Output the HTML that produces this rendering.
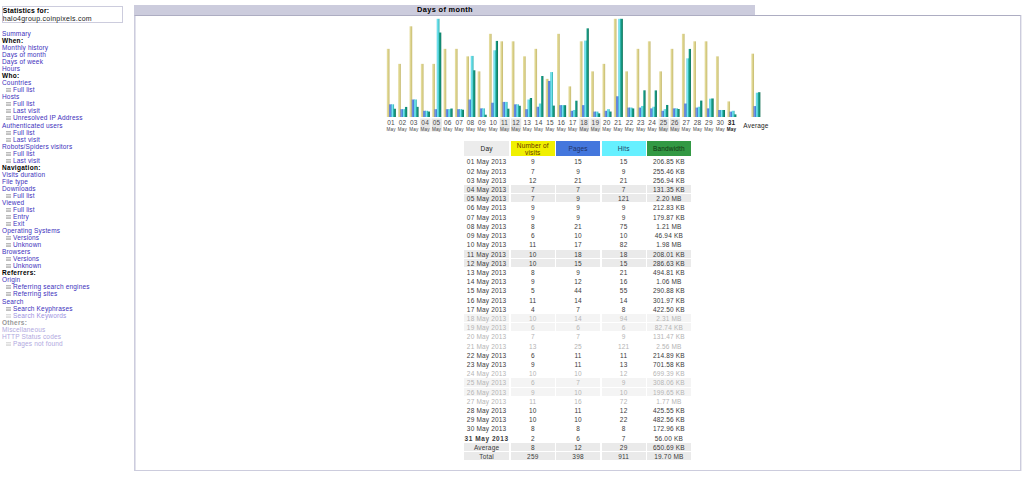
<!DOCTYPE html>
<html><head><meta charset="utf-8"><title>Days of month</title>
<style>
html,body{margin:0;padding:0;background:#fff;}
body{width:1024px;height:478px;overflow:hidden;position:relative;font-family:"Liberation Sans",sans-serif;}
.t{position:absolute;white-space:nowrap;}
.b{position:absolute;}
.ic{width:5px;height:4px;background:linear-gradient(180deg,#bababa 0 1px,#e0e0e0 1px 2px,#cacaca 2px 3px,#bebebe 3px 4px);}
</style></head><body>
<div class="b" style="left:2px;top:6px;width:119px;height:15px;border:1px solid #CCCCDD;"></div>
<div class="t" style="left:2.80px;top:8px;font-size:6.8px;line-height:6.8px;letter-spacing:0.2px;color:#000;font-weight:bold;">Statistics for:</div>
<div class="t" style="left:2.80px;top:15px;font-size:7.0px;line-height:7.0px;letter-spacing:0.25px;color:#222;">halo4group.coinpixels.com</div>
<div class="t" style="left:2.00px;top:31px;font-size:6.5px;line-height:6.5px;letter-spacing:0.17px;color:#3c30bc;">Summary</div>
<div class="t" style="left:2.00px;top:38px;font-size:6.5px;line-height:6.5px;letter-spacing:0.3px;color:#000;font-weight:bold;">When:</div>
<div class="t" style="left:2.00px;top:45px;font-size:6.5px;line-height:6.5px;letter-spacing:0.17px;color:#3c30bc;">Monthly history</div>
<div class="t" style="left:2.00px;top:52px;font-size:6.5px;line-height:6.5px;letter-spacing:0.17px;color:#3c30bc;">Days of month</div>
<div class="t" style="left:2.00px;top:59px;font-size:6.5px;line-height:6.5px;letter-spacing:0.17px;color:#3c30bc;">Days of week</div>
<div class="t" style="left:2.00px;top:66px;font-size:6.5px;line-height:6.5px;letter-spacing:0.17px;color:#3c30bc;">Hours</div>
<div class="t" style="left:2.00px;top:73px;font-size:6.5px;line-height:6.5px;letter-spacing:0.3px;color:#000;font-weight:bold;">Who:</div>
<div class="t" style="left:2.00px;top:80px;font-size:6.5px;line-height:6.5px;letter-spacing:0.17px;color:#3c30bc;">Countries</div>
<div class="b ic" style="left:6px;top:88px;"></div>
<div class="t" style="left:13.00px;top:87px;font-size:6.5px;line-height:6.5px;letter-spacing:0.17px;color:#3c30bc;">Full list</div>
<div class="t" style="left:2.00px;top:94px;font-size:6.5px;line-height:6.5px;letter-spacing:0.17px;color:#3c30bc;">Hosts</div>
<div class="b ic" style="left:6px;top:102px;"></div>
<div class="t" style="left:13.00px;top:101px;font-size:6.5px;line-height:6.5px;letter-spacing:0.17px;color:#3c30bc;">Full list</div>
<div class="b ic" style="left:6px;top:109px;"></div>
<div class="t" style="left:13.00px;top:108px;font-size:6.5px;line-height:6.5px;letter-spacing:0.17px;color:#3c30bc;">Last visit</div>
<div class="b ic" style="left:6px;top:116px;"></div>
<div class="t" style="left:13.00px;top:115px;font-size:6.5px;line-height:6.5px;letter-spacing:0.17px;color:#3c30bc;">Unresolved IP Address</div>
<div class="t" style="left:2.00px;top:123px;font-size:6.5px;line-height:6.5px;letter-spacing:0.17px;color:#3c30bc;">Authenticated users</div>
<div class="b ic" style="left:6px;top:131px;"></div>
<div class="t" style="left:13.00px;top:130px;font-size:6.5px;line-height:6.5px;letter-spacing:0.17px;color:#3c30bc;">Full list</div>
<div class="b ic" style="left:6px;top:138px;"></div>
<div class="t" style="left:13.00px;top:137px;font-size:6.5px;line-height:6.5px;letter-spacing:0.17px;color:#3c30bc;">Last visit</div>
<div class="t" style="left:2.00px;top:144px;font-size:6.5px;line-height:6.5px;letter-spacing:0.17px;color:#3c30bc;">Robots/Spiders visitors</div>
<div class="b ic" style="left:6px;top:152px;"></div>
<div class="t" style="left:13.00px;top:151px;font-size:6.5px;line-height:6.5px;letter-spacing:0.17px;color:#3c30bc;">Full list</div>
<div class="b ic" style="left:6px;top:159px;"></div>
<div class="t" style="left:13.00px;top:158px;font-size:6.5px;line-height:6.5px;letter-spacing:0.17px;color:#3c30bc;">Last visit</div>
<div class="t" style="left:2.00px;top:165px;font-size:6.5px;line-height:6.5px;letter-spacing:0.3px;color:#000;font-weight:bold;">Navigation:</div>
<div class="t" style="left:2.00px;top:172px;font-size:6.5px;line-height:6.5px;letter-spacing:0.17px;color:#3c30bc;">Visits duration</div>
<div class="t" style="left:2.00px;top:179px;font-size:6.5px;line-height:6.5px;letter-spacing:0.17px;color:#3c30bc;">File type</div>
<div class="t" style="left:2.00px;top:186px;font-size:6.5px;line-height:6.5px;letter-spacing:0.17px;color:#3c30bc;">Downloads</div>
<div class="b ic" style="left:6px;top:194px;"></div>
<div class="t" style="left:13.00px;top:193px;font-size:6.5px;line-height:6.5px;letter-spacing:0.17px;color:#3c30bc;">Full list</div>
<div class="t" style="left:2.00px;top:200px;font-size:6.5px;line-height:6.5px;letter-spacing:0.17px;color:#3c30bc;">Viewed</div>
<div class="b ic" style="left:6px;top:208px;"></div>
<div class="t" style="left:13.00px;top:207px;font-size:6.5px;line-height:6.5px;letter-spacing:0.17px;color:#3c30bc;">Full list</div>
<div class="b ic" style="left:6px;top:215px;"></div>
<div class="t" style="left:13.00px;top:214px;font-size:6.5px;line-height:6.5px;letter-spacing:0.17px;color:#3c30bc;">Entry</div>
<div class="b ic" style="left:6px;top:222px;"></div>
<div class="t" style="left:13.00px;top:221px;font-size:6.5px;line-height:6.5px;letter-spacing:0.17px;color:#3c30bc;">Exit</div>
<div class="t" style="left:2.00px;top:228px;font-size:6.5px;line-height:6.5px;letter-spacing:0.17px;color:#3c30bc;">Operating Systems</div>
<div class="b ic" style="left:6px;top:236px;"></div>
<div class="t" style="left:13.00px;top:235px;font-size:6.5px;line-height:6.5px;letter-spacing:0.17px;color:#3c30bc;">Versions</div>
<div class="b ic" style="left:6px;top:243px;"></div>
<div class="t" style="left:13.00px;top:242px;font-size:6.5px;line-height:6.5px;letter-spacing:0.17px;color:#3c30bc;">Unknown</div>
<div class="t" style="left:2.00px;top:249px;font-size:6.5px;line-height:6.5px;letter-spacing:0.17px;color:#3c30bc;">Browsers</div>
<div class="b ic" style="left:6px;top:257px;"></div>
<div class="t" style="left:13.00px;top:256px;font-size:6.5px;line-height:6.5px;letter-spacing:0.17px;color:#3c30bc;">Versions</div>
<div class="b ic" style="left:6px;top:264px;"></div>
<div class="t" style="left:13.00px;top:263px;font-size:6.5px;line-height:6.5px;letter-spacing:0.17px;color:#3c30bc;">Unknown</div>
<div class="t" style="left:2.00px;top:270px;font-size:6.5px;line-height:6.5px;letter-spacing:0.3px;color:#000;font-weight:bold;">Referrers:</div>
<div class="t" style="left:2.00px;top:277px;font-size:6.5px;line-height:6.5px;letter-spacing:0.17px;color:#3c30bc;">Origin</div>
<div class="b ic" style="left:6px;top:285px;"></div>
<div class="t" style="left:13.00px;top:284px;font-size:6.5px;line-height:6.5px;letter-spacing:0.17px;color:#3c30bc;">Referring search engines</div>
<div class="b ic" style="left:6px;top:292px;"></div>
<div class="t" style="left:13.00px;top:291px;font-size:6.5px;line-height:6.5px;letter-spacing:0.17px;color:#3c30bc;">Referring sites</div>
<div class="t" style="left:2.00px;top:299px;font-size:6.5px;line-height:6.5px;letter-spacing:0.17px;color:#3c30bc;">Search</div>
<div class="b ic" style="left:6px;top:307px;"></div>
<div class="t" style="left:13.00px;top:306px;font-size:6.5px;line-height:6.5px;letter-spacing:0.17px;color:#3c30bc;">Search Keyphrases</div>
<div class="b ic" style="left:6px;top:314px;opacity:.5;"></div>
<div class="t" style="left:13.00px;top:313px;font-size:6.5px;line-height:6.5px;letter-spacing:0.17px;color:#9c92e2;">Search Keywords</div>
<div class="t" style="left:2.00px;top:320px;font-size:6.5px;line-height:6.5px;letter-spacing:0.3px;color:#999;font-weight:bold;">Others:</div>
<div class="t" style="left:2.00px;top:327px;font-size:6.5px;line-height:6.5px;letter-spacing:0.17px;color:#b0a8e0;">Miscellaneous</div>
<div class="t" style="left:2.00px;top:334px;font-size:6.5px;line-height:6.5px;letter-spacing:0.17px;color:#b0a8e0;">HTTP Status codes</div>
<div class="b ic" style="left:6px;top:342px;opacity:.5;"></div>
<div class="t" style="left:13.00px;top:341px;font-size:6.5px;line-height:6.5px;letter-spacing:0.17px;color:#b0a8e0;">Pages not found</div>
<div class="b" style="left:134px;top:15px;width:885px;height:454px;border:1px solid #CCCCDD;border-top-color:#ADADC2;box-shadow:inset 1px 0 0 #E2E2EC, 1px 0 0 #EAEAF0;"></div>
<div class="b" style="left:134px;top:5px;width:621px;height:10px;background:#CCCCDD;"></div>
<div class="t" style="left:345.00px;width:200px;text-align:center;top:6px;font-size:7.4px;line-height:7.4px;letter-spacing:0.35px;color:#000;font-weight:bold;">Days of month</div>
<svg class="b" style="left:0;top:0" width="1024" height="140"><defs><linearGradient id="gv" x1="0" x2="1"><stop offset="0" stop-color="#E8E0A8"/><stop offset="0.5" stop-color="#DCD38A"/><stop offset="1" stop-color="#C4B870"/></linearGradient><linearGradient id="gp" x1="0" x2="1"><stop offset="0" stop-color="#5070C4"/><stop offset="0.35" stop-color="#7696EA"/><stop offset="0.7" stop-color="#4A78D8"/><stop offset="1" stop-color="#2064B0"/></linearGradient><linearGradient id="gh" x1="0" x2="1"><stop offset="0" stop-color="#4CCADE"/><stop offset="0.4" stop-color="#78E8F2"/><stop offset="1" stop-color="#24A8A8"/></linearGradient><linearGradient id="gk" x1="0" x2="1"><stop offset="0" stop-color="#18A088"/><stop offset="0.6" stop-color="#12907A"/><stop offset="1" stop-color="#0A6A4C"/></linearGradient></defs><rect x="420.25" y="118.5" width="10.2" height="13.1" fill="#E6E6E6"/><rect x="431.60" y="118.5" width="10.2" height="13.1" fill="#E6E6E6"/><rect x="499.70" y="118.5" width="10.2" height="13.1" fill="#E6E6E6"/><rect x="511.05" y="118.5" width="10.2" height="13.1" fill="#E6E6E6"/><rect x="579.15" y="118.5" width="10.2" height="13.1" fill="#E6E6E6"/><rect x="590.50" y="118.5" width="10.2" height="13.1" fill="#E6E6E6"/><rect x="658.60" y="118.5" width="10.2" height="13.1" fill="#E6E6E6"/><rect x="669.95" y="118.5" width="10.2" height="13.1" fill="#E6E6E6"/><rect x="386.80" y="48.84" width="2.718" height="68.16" fill="url(#gv)"/><rect x="389.07" y="104.33" width="2.718" height="12.67" fill="url(#gp)"/><rect x="391.34" y="104.33" width="2.718" height="12.67" fill="url(#gh)"/><rect x="393.60" y="108.73" width="2.268" height="8.27" fill="url(#gk)"/><rect x="398.15" y="63.86" width="2.718" height="53.14" fill="url(#gv)"/><rect x="400.42" y="109.17" width="2.718" height="7.83" fill="url(#gp)"/><rect x="402.69" y="109.17" width="2.718" height="7.83" fill="url(#gh)"/><rect x="404.95" y="106.92" width="2.268" height="10.08" fill="url(#gk)"/><rect x="409.50" y="26.31" width="2.718" height="90.69" fill="url(#gv)"/><rect x="411.77" y="99.49" width="2.718" height="17.51" fill="url(#gp)"/><rect x="414.04" y="99.49" width="2.718" height="17.51" fill="url(#gh)"/><rect x="416.30" y="106.86" width="2.268" height="10.14" fill="url(#gk)"/><rect x="420.85" y="63.86" width="2.718" height="53.14" fill="url(#gv)"/><rect x="423.12" y="110.78" width="2.718" height="6.22" fill="url(#gp)"/><rect x="425.39" y="110.78" width="2.718" height="6.22" fill="url(#gh)"/><rect x="427.65" y="111.54" width="2.268" height="5.46" fill="url(#gk)"/><rect x="432.20" y="63.86" width="2.718" height="53.14" fill="url(#gv)"/><rect x="434.47" y="109.17" width="2.718" height="7.83" fill="url(#gp)"/><rect x="436.74" y="18.80" width="2.718" height="98.20" fill="url(#gh)"/><rect x="439.00" y="32.53" width="2.268" height="84.47" fill="url(#gk)"/><rect x="443.55" y="48.84" width="2.718" height="68.16" fill="url(#gv)"/><rect x="445.82" y="109.17" width="2.718" height="7.83" fill="url(#gp)"/><rect x="448.09" y="109.17" width="2.718" height="7.83" fill="url(#gh)"/><rect x="450.35" y="108.51" width="2.268" height="8.49" fill="url(#gk)"/><rect x="454.90" y="48.84" width="2.718" height="68.16" fill="url(#gv)"/><rect x="457.17" y="109.17" width="2.718" height="7.83" fill="url(#gp)"/><rect x="459.44" y="109.17" width="2.718" height="7.83" fill="url(#gh)"/><rect x="461.70" y="109.73" width="2.268" height="7.27" fill="url(#gk)"/><rect x="466.25" y="56.35" width="2.718" height="60.65" fill="url(#gv)"/><rect x="468.52" y="99.49" width="2.718" height="17.51" fill="url(#gp)"/><rect x="470.79" y="55.91" width="2.718" height="61.09" fill="url(#gh)"/><rect x="473.05" y="70.28" width="2.268" height="46.72" fill="url(#gk)"/><rect x="477.60" y="71.37" width="2.718" height="45.63" fill="url(#gv)"/><rect x="479.87" y="108.36" width="2.718" height="8.64" fill="url(#gp)"/><rect x="482.14" y="108.36" width="2.718" height="8.64" fill="url(#gh)"/><rect x="484.40" y="114.68" width="2.268" height="2.32" fill="url(#gk)"/><rect x="488.95" y="33.82" width="2.718" height="83.18" fill="url(#gv)"/><rect x="491.22" y="102.72" width="2.718" height="14.28" fill="url(#gp)"/><rect x="493.49" y="50.27" width="2.718" height="66.73" fill="url(#gh)"/><rect x="495.75" y="40.92" width="2.268" height="76.08" fill="url(#gk)"/><rect x="500.30" y="41.33" width="2.718" height="75.67" fill="url(#gv)"/><rect x="502.57" y="101.91" width="2.718" height="15.09" fill="url(#gp)"/><rect x="504.84" y="101.91" width="2.718" height="15.09" fill="url(#gh)"/><rect x="507.10" y="108.69" width="2.268" height="8.31" fill="url(#gk)"/><rect x="511.65" y="41.33" width="2.718" height="75.67" fill="url(#gv)"/><rect x="513.92" y="104.33" width="2.718" height="12.67" fill="url(#gp)"/><rect x="516.19" y="104.33" width="2.718" height="12.67" fill="url(#gh)"/><rect x="518.45" y="105.76" width="2.268" height="11.24" fill="url(#gk)"/><rect x="523.00" y="56.35" width="2.718" height="60.65" fill="url(#gv)"/><rect x="525.27" y="109.17" width="2.718" height="7.83" fill="url(#gp)"/><rect x="527.54" y="99.49" width="2.718" height="17.51" fill="url(#gh)"/><rect x="529.80" y="98.00" width="2.268" height="19.00" fill="url(#gk)"/><rect x="534.35" y="48.84" width="2.718" height="68.16" fill="url(#gv)"/><rect x="536.62" y="106.75" width="2.718" height="10.25" fill="url(#gp)"/><rect x="538.89" y="103.52" width="2.718" height="13.48" fill="url(#gh)"/><rect x="541.15" y="76.01" width="2.268" height="40.99" fill="url(#gk)"/><rect x="545.70" y="78.88" width="2.718" height="38.12" fill="url(#gv)"/><rect x="547.97" y="80.93" width="2.718" height="36.07" fill="url(#gp)"/><rect x="550.24" y="72.05" width="2.718" height="44.95" fill="url(#gh)"/><rect x="552.50" y="105.60" width="2.268" height="11.40" fill="url(#gk)"/><rect x="557.05" y="33.82" width="2.718" height="83.18" fill="url(#gv)"/><rect x="559.32" y="105.14" width="2.718" height="11.86" fill="url(#gp)"/><rect x="561.59" y="105.14" width="2.718" height="11.86" fill="url(#gh)"/><rect x="563.85" y="105.19" width="2.268" height="11.81" fill="url(#gk)"/><rect x="568.40" y="86.39" width="2.718" height="30.61" fill="url(#gv)"/><rect x="570.67" y="110.78" width="2.718" height="6.22" fill="url(#gp)"/><rect x="572.94" y="109.98" width="2.718" height="7.02" fill="url(#gh)"/><rect x="575.20" y="100.70" width="2.268" height="16.30" fill="url(#gk)"/><rect x="579.75" y="41.33" width="2.718" height="75.67" fill="url(#gv)"/><rect x="582.02" y="105.14" width="2.718" height="11.86" fill="url(#gp)"/><rect x="584.29" y="40.58" width="2.718" height="76.42" fill="url(#gh)"/><rect x="586.55" y="28.33" width="2.268" height="88.67" fill="url(#gk)"/><rect x="591.10" y="71.37" width="2.718" height="45.63" fill="url(#gv)"/><rect x="593.37" y="111.59" width="2.718" height="5.41" fill="url(#gp)"/><rect x="595.64" y="111.59" width="2.718" height="5.41" fill="url(#gh)"/><rect x="597.90" y="113.35" width="2.268" height="3.65" fill="url(#gk)"/><rect x="602.45" y="63.86" width="2.718" height="53.14" fill="url(#gv)"/><rect x="604.72" y="110.78" width="2.718" height="6.22" fill="url(#gp)"/><rect x="606.99" y="109.17" width="2.718" height="7.83" fill="url(#gh)"/><rect x="609.25" y="111.54" width="2.268" height="5.46" fill="url(#gk)"/><rect x="613.80" y="18.80" width="2.718" height="98.20" fill="url(#gv)"/><rect x="616.07" y="96.26" width="2.718" height="20.74" fill="url(#gp)"/><rect x="618.34" y="18.80" width="2.718" height="98.20" fill="url(#gh)"/><rect x="620.60" y="18.80" width="2.268" height="98.20" fill="url(#gk)"/><rect x="625.15" y="71.37" width="2.718" height="45.63" fill="url(#gv)"/><rect x="627.42" y="107.56" width="2.718" height="9.44" fill="url(#gp)"/><rect x="629.69" y="107.56" width="2.718" height="9.44" fill="url(#gh)"/><rect x="631.95" y="108.43" width="2.268" height="8.57" fill="url(#gk)"/><rect x="636.50" y="48.84" width="2.718" height="68.16" fill="url(#gv)"/><rect x="638.77" y="107.56" width="2.718" height="9.44" fill="url(#gp)"/><rect x="641.04" y="105.94" width="2.718" height="11.06" fill="url(#gh)"/><rect x="643.30" y="90.30" width="2.268" height="26.70" fill="url(#gk)"/><rect x="647.85" y="41.33" width="2.718" height="75.67" fill="url(#gv)"/><rect x="650.12" y="108.36" width="2.718" height="8.64" fill="url(#gp)"/><rect x="652.39" y="106.75" width="2.718" height="10.25" fill="url(#gh)"/><rect x="654.65" y="90.38" width="2.268" height="26.62" fill="url(#gk)"/><rect x="659.20" y="71.37" width="2.718" height="45.63" fill="url(#gv)"/><rect x="661.47" y="110.78" width="2.718" height="6.22" fill="url(#gp)"/><rect x="663.74" y="109.17" width="2.718" height="7.83" fill="url(#gh)"/><rect x="666.00" y="104.96" width="2.268" height="12.04" fill="url(#gk)"/><rect x="670.55" y="48.84" width="2.718" height="68.16" fill="url(#gv)"/><rect x="672.82" y="108.36" width="2.718" height="8.64" fill="url(#gp)"/><rect x="675.09" y="108.36" width="2.718" height="8.64" fill="url(#gh)"/><rect x="677.35" y="109.00" width="2.268" height="8.00" fill="url(#gk)"/><rect x="681.90" y="33.82" width="2.718" height="83.18" fill="url(#gv)"/><rect x="684.17" y="103.52" width="2.718" height="13.48" fill="url(#gp)"/><rect x="686.44" y="58.33" width="2.718" height="58.67" fill="url(#gh)"/><rect x="688.70" y="48.93" width="2.268" height="68.07" fill="url(#gk)"/><rect x="693.25" y="41.33" width="2.718" height="75.67" fill="url(#gv)"/><rect x="695.52" y="107.56" width="2.718" height="9.44" fill="url(#gp)"/><rect x="697.79" y="106.75" width="2.718" height="10.25" fill="url(#gh)"/><rect x="700.05" y="100.58" width="2.268" height="16.42" fill="url(#gk)"/><rect x="704.60" y="41.33" width="2.718" height="75.67" fill="url(#gv)"/><rect x="706.87" y="108.36" width="2.718" height="8.64" fill="url(#gp)"/><rect x="709.14" y="98.68" width="2.718" height="18.32" fill="url(#gh)"/><rect x="711.40" y="98.46" width="2.268" height="18.54" fill="url(#gk)"/><rect x="715.95" y="56.35" width="2.718" height="60.65" fill="url(#gv)"/><rect x="718.22" y="109.98" width="2.718" height="7.02" fill="url(#gp)"/><rect x="720.49" y="109.98" width="2.718" height="7.02" fill="url(#gh)"/><rect x="722.75" y="109.99" width="2.268" height="7.01" fill="url(#gk)"/><rect x="727.30" y="101.41" width="2.718" height="15.59" fill="url(#gv)"/><rect x="729.57" y="111.59" width="2.718" height="5.41" fill="url(#gp)"/><rect x="731.84" y="110.78" width="2.718" height="6.22" fill="url(#gh)"/><rect x="734.10" y="114.35" width="2.268" height="2.65" fill="url(#gk)"/><rect x="751.30" y="53.68" width="2.718" height="63.32" fill="url(#gv)"/><rect x="753.57" y="106.07" width="2.718" height="10.93" fill="url(#gp)"/><rect x="755.84" y="92.72" width="2.718" height="24.28" fill="url(#gh)"/><rect x="758.10" y="92.20" width="2.268" height="24.80" fill="url(#gk)"/></svg>
<div class="t" style="left:291.10px;width:200px;text-align:center;top:120px;font-size:6.5px;line-height:6.5px;letter-spacing:0.17px;color:#4a4a4a;">01</div>
<div class="t" style="left:291.10px;width:200px;text-align:center;top:128px;font-size:4.6px;line-height:4.6px;letter-spacing:0.17px;color:#484848;">May</div>
<div class="t" style="left:302.45px;width:200px;text-align:center;top:120px;font-size:6.5px;line-height:6.5px;letter-spacing:0.17px;color:#4a4a4a;">02</div>
<div class="t" style="left:302.45px;width:200px;text-align:center;top:128px;font-size:4.6px;line-height:4.6px;letter-spacing:0.17px;color:#484848;">May</div>
<div class="t" style="left:313.80px;width:200px;text-align:center;top:120px;font-size:6.5px;line-height:6.5px;letter-spacing:0.17px;color:#4a4a4a;">03</div>
<div class="t" style="left:313.80px;width:200px;text-align:center;top:128px;font-size:4.6px;line-height:4.6px;letter-spacing:0.17px;color:#484848;">May</div>
<div class="t" style="left:325.15px;width:200px;text-align:center;top:120px;font-size:6.5px;line-height:6.5px;letter-spacing:0.17px;color:#4a4a4a;">04</div>
<div class="t" style="left:325.15px;width:200px;text-align:center;top:128px;font-size:4.6px;line-height:4.6px;letter-spacing:0.17px;color:#484848;">May</div>
<div class="t" style="left:336.50px;width:200px;text-align:center;top:120px;font-size:6.5px;line-height:6.5px;letter-spacing:0.17px;color:#4a4a4a;">05</div>
<div class="t" style="left:336.50px;width:200px;text-align:center;top:128px;font-size:4.6px;line-height:4.6px;letter-spacing:0.17px;color:#484848;">May</div>
<div class="t" style="left:347.85px;width:200px;text-align:center;top:120px;font-size:6.5px;line-height:6.5px;letter-spacing:0.17px;color:#4a4a4a;">06</div>
<div class="t" style="left:347.85px;width:200px;text-align:center;top:128px;font-size:4.6px;line-height:4.6px;letter-spacing:0.17px;color:#484848;">May</div>
<div class="t" style="left:359.20px;width:200px;text-align:center;top:120px;font-size:6.5px;line-height:6.5px;letter-spacing:0.17px;color:#4a4a4a;">07</div>
<div class="t" style="left:359.20px;width:200px;text-align:center;top:128px;font-size:4.6px;line-height:4.6px;letter-spacing:0.17px;color:#484848;">May</div>
<div class="t" style="left:370.55px;width:200px;text-align:center;top:120px;font-size:6.5px;line-height:6.5px;letter-spacing:0.17px;color:#4a4a4a;">08</div>
<div class="t" style="left:370.55px;width:200px;text-align:center;top:128px;font-size:4.6px;line-height:4.6px;letter-spacing:0.17px;color:#484848;">May</div>
<div class="t" style="left:381.90px;width:200px;text-align:center;top:120px;font-size:6.5px;line-height:6.5px;letter-spacing:0.17px;color:#4a4a4a;">09</div>
<div class="t" style="left:381.90px;width:200px;text-align:center;top:128px;font-size:4.6px;line-height:4.6px;letter-spacing:0.17px;color:#484848;">May</div>
<div class="t" style="left:393.25px;width:200px;text-align:center;top:120px;font-size:6.5px;line-height:6.5px;letter-spacing:0.17px;color:#4a4a4a;">10</div>
<div class="t" style="left:393.25px;width:200px;text-align:center;top:128px;font-size:4.6px;line-height:4.6px;letter-spacing:0.17px;color:#484848;">May</div>
<div class="t" style="left:404.60px;width:200px;text-align:center;top:120px;font-size:6.5px;line-height:6.5px;letter-spacing:0.17px;color:#4a4a4a;">11</div>
<div class="t" style="left:404.60px;width:200px;text-align:center;top:128px;font-size:4.6px;line-height:4.6px;letter-spacing:0.17px;color:#484848;">May</div>
<div class="t" style="left:415.95px;width:200px;text-align:center;top:120px;font-size:6.5px;line-height:6.5px;letter-spacing:0.17px;color:#4a4a4a;">12</div>
<div class="t" style="left:415.95px;width:200px;text-align:center;top:128px;font-size:4.6px;line-height:4.6px;letter-spacing:0.17px;color:#484848;">May</div>
<div class="t" style="left:427.30px;width:200px;text-align:center;top:120px;font-size:6.5px;line-height:6.5px;letter-spacing:0.17px;color:#4a4a4a;">13</div>
<div class="t" style="left:427.30px;width:200px;text-align:center;top:128px;font-size:4.6px;line-height:4.6px;letter-spacing:0.17px;color:#484848;">May</div>
<div class="t" style="left:438.65px;width:200px;text-align:center;top:120px;font-size:6.5px;line-height:6.5px;letter-spacing:0.17px;color:#4a4a4a;">14</div>
<div class="t" style="left:438.65px;width:200px;text-align:center;top:128px;font-size:4.6px;line-height:4.6px;letter-spacing:0.17px;color:#484848;">May</div>
<div class="t" style="left:450.00px;width:200px;text-align:center;top:120px;font-size:6.5px;line-height:6.5px;letter-spacing:0.17px;color:#4a4a4a;">15</div>
<div class="t" style="left:450.00px;width:200px;text-align:center;top:128px;font-size:4.6px;line-height:4.6px;letter-spacing:0.17px;color:#484848;">May</div>
<div class="t" style="left:461.35px;width:200px;text-align:center;top:120px;font-size:6.5px;line-height:6.5px;letter-spacing:0.17px;color:#4a4a4a;">16</div>
<div class="t" style="left:461.35px;width:200px;text-align:center;top:128px;font-size:4.6px;line-height:4.6px;letter-spacing:0.17px;color:#484848;">May</div>
<div class="t" style="left:472.70px;width:200px;text-align:center;top:120px;font-size:6.5px;line-height:6.5px;letter-spacing:0.17px;color:#4a4a4a;">17</div>
<div class="t" style="left:472.70px;width:200px;text-align:center;top:128px;font-size:4.6px;line-height:4.6px;letter-spacing:0.17px;color:#484848;">May</div>
<div class="t" style="left:484.05px;width:200px;text-align:center;top:120px;font-size:6.5px;line-height:6.5px;letter-spacing:0.17px;color:#4a4a4a;">18</div>
<div class="t" style="left:484.05px;width:200px;text-align:center;top:128px;font-size:4.6px;line-height:4.6px;letter-spacing:0.17px;color:#484848;">May</div>
<div class="t" style="left:495.40px;width:200px;text-align:center;top:120px;font-size:6.5px;line-height:6.5px;letter-spacing:0.17px;color:#4a4a4a;">19</div>
<div class="t" style="left:495.40px;width:200px;text-align:center;top:128px;font-size:4.6px;line-height:4.6px;letter-spacing:0.17px;color:#484848;">May</div>
<div class="t" style="left:506.75px;width:200px;text-align:center;top:120px;font-size:6.5px;line-height:6.5px;letter-spacing:0.17px;color:#4a4a4a;">20</div>
<div class="t" style="left:506.75px;width:200px;text-align:center;top:128px;font-size:4.6px;line-height:4.6px;letter-spacing:0.17px;color:#484848;">May</div>
<div class="t" style="left:518.10px;width:200px;text-align:center;top:120px;font-size:6.5px;line-height:6.5px;letter-spacing:0.17px;color:#4a4a4a;">21</div>
<div class="t" style="left:518.10px;width:200px;text-align:center;top:128px;font-size:4.6px;line-height:4.6px;letter-spacing:0.17px;color:#484848;">May</div>
<div class="t" style="left:529.45px;width:200px;text-align:center;top:120px;font-size:6.5px;line-height:6.5px;letter-spacing:0.17px;color:#4a4a4a;">22</div>
<div class="t" style="left:529.45px;width:200px;text-align:center;top:128px;font-size:4.6px;line-height:4.6px;letter-spacing:0.17px;color:#484848;">May</div>
<div class="t" style="left:540.80px;width:200px;text-align:center;top:120px;font-size:6.5px;line-height:6.5px;letter-spacing:0.17px;color:#4a4a4a;">23</div>
<div class="t" style="left:540.80px;width:200px;text-align:center;top:128px;font-size:4.6px;line-height:4.6px;letter-spacing:0.17px;color:#484848;">May</div>
<div class="t" style="left:552.15px;width:200px;text-align:center;top:120px;font-size:6.5px;line-height:6.5px;letter-spacing:0.17px;color:#4a4a4a;">24</div>
<div class="t" style="left:552.15px;width:200px;text-align:center;top:128px;font-size:4.6px;line-height:4.6px;letter-spacing:0.17px;color:#484848;">May</div>
<div class="t" style="left:563.50px;width:200px;text-align:center;top:120px;font-size:6.5px;line-height:6.5px;letter-spacing:0.17px;color:#4a4a4a;">25</div>
<div class="t" style="left:563.50px;width:200px;text-align:center;top:128px;font-size:4.6px;line-height:4.6px;letter-spacing:0.17px;color:#484848;">May</div>
<div class="t" style="left:574.85px;width:200px;text-align:center;top:120px;font-size:6.5px;line-height:6.5px;letter-spacing:0.17px;color:#4a4a4a;">26</div>
<div class="t" style="left:574.85px;width:200px;text-align:center;top:128px;font-size:4.6px;line-height:4.6px;letter-spacing:0.17px;color:#484848;">May</div>
<div class="t" style="left:586.20px;width:200px;text-align:center;top:120px;font-size:6.5px;line-height:6.5px;letter-spacing:0.17px;color:#4a4a4a;">27</div>
<div class="t" style="left:586.20px;width:200px;text-align:center;top:128px;font-size:4.6px;line-height:4.6px;letter-spacing:0.17px;color:#484848;">May</div>
<div class="t" style="left:597.55px;width:200px;text-align:center;top:120px;font-size:6.5px;line-height:6.5px;letter-spacing:0.17px;color:#4a4a4a;">28</div>
<div class="t" style="left:597.55px;width:200px;text-align:center;top:128px;font-size:4.6px;line-height:4.6px;letter-spacing:0.17px;color:#484848;">May</div>
<div class="t" style="left:608.90px;width:200px;text-align:center;top:120px;font-size:6.5px;line-height:6.5px;letter-spacing:0.17px;color:#4a4a4a;">29</div>
<div class="t" style="left:608.90px;width:200px;text-align:center;top:128px;font-size:4.6px;line-height:4.6px;letter-spacing:0.17px;color:#484848;">May</div>
<div class="t" style="left:620.25px;width:200px;text-align:center;top:120px;font-size:6.5px;line-height:6.5px;letter-spacing:0.17px;color:#4a4a4a;">30</div>
<div class="t" style="left:620.25px;width:200px;text-align:center;top:128px;font-size:4.6px;line-height:4.6px;letter-spacing:0.17px;color:#484848;">May</div>
<div class="t" style="left:631.60px;width:200px;text-align:center;top:120px;font-size:6.5px;line-height:6.5px;letter-spacing:0.17px;color:#222;font-weight:bold;">31</div>
<div class="t" style="left:631.60px;width:200px;text-align:center;top:128px;font-size:4.6px;line-height:4.6px;letter-spacing:0.17px;color:#222;font-weight:bold;">May</div>
<div class="t" style="left:656.00px;width:200px;text-align:center;top:123px;font-size:6.5px;line-height:6.5px;letter-spacing:0.17px;color:#222;">Average</div>
<div class="b" style="left:464.0px;top:141px;width:45.2px;height:15.3px;background:#ECECEC;"></div>
<div class="b" style="left:510.6px;top:141px;width:44.4px;height:15.3px;background:#F0F000;"></div>
<div class="b" style="left:556.0px;top:141px;width:44.1px;height:15.3px;background:#4477DD;"></div>
<div class="b" style="left:601.5px;top:141px;width:44.3px;height:15.3px;background:#66F0FF;"></div>
<div class="b" style="left:646.9px;top:141px;width:44.0px;height:15.3px;background:#339944;"></div>
<div class="t" style="left:386.60px;width:200px;text-align:center;top:146px;font-size:6.5px;line-height:6.5px;letter-spacing:0.17px;color:#222;">Day</div>
<div class="t" style="left:432.80px;width:200px;text-align:center;top:143px;font-size:6.5px;line-height:6.5px;letter-spacing:0.17px;color:#663300;">Number of</div>
<div class="t" style="left:432.80px;width:200px;text-align:center;top:150px;font-size:6.5px;line-height:6.5px;letter-spacing:0.17px;color:#663300;">visits</div>
<div class="t" style="left:478.05px;width:200px;text-align:center;top:146px;font-size:6.5px;line-height:6.5px;letter-spacing:0.17px;color:#223366;">Pages</div>
<div class="t" style="left:523.65px;width:200px;text-align:center;top:146px;font-size:6.5px;line-height:6.5px;letter-spacing:0.17px;color:#224466;">Hits</div>
<div class="t" style="left:568.90px;width:200px;text-align:center;top:146px;font-size:6.5px;line-height:6.5px;letter-spacing:0.17px;color:#113311;">Bandwidth</div>
<div class="t" style="left:386.60px;width:200px;text-align:center;top:159px;font-size:6.5px;line-height:6.5px;letter-spacing:0.17px;color:#3a3a3a;">01 May 2013</div>
<div class="t" style="left:432.80px;width:200px;text-align:center;top:159px;font-size:6.5px;line-height:6.5px;letter-spacing:0.17px;color:#3a3a3a;">9</div>
<div class="t" style="left:478.05px;width:200px;text-align:center;top:159px;font-size:6.5px;line-height:6.5px;letter-spacing:0.17px;color:#3a3a3a;">15</div>
<div class="t" style="left:523.65px;width:200px;text-align:center;top:159px;font-size:6.5px;line-height:6.5px;letter-spacing:0.17px;color:#3a3a3a;">15</div>
<div class="t" style="left:568.90px;width:200px;text-align:center;top:159px;font-size:6.5px;line-height:6.5px;letter-spacing:0.17px;color:#3a3a3a;">206.85 KB</div>
<div class="t" style="left:386.60px;width:200px;text-align:center;top:169px;font-size:6.5px;line-height:6.5px;letter-spacing:0.17px;color:#3a3a3a;">02 May 2013</div>
<div class="t" style="left:432.80px;width:200px;text-align:center;top:169px;font-size:6.5px;line-height:6.5px;letter-spacing:0.17px;color:#3a3a3a;">7</div>
<div class="t" style="left:478.05px;width:200px;text-align:center;top:169px;font-size:6.5px;line-height:6.5px;letter-spacing:0.17px;color:#3a3a3a;">9</div>
<div class="t" style="left:523.65px;width:200px;text-align:center;top:169px;font-size:6.5px;line-height:6.5px;letter-spacing:0.17px;color:#3a3a3a;">9</div>
<div class="t" style="left:568.90px;width:200px;text-align:center;top:169px;font-size:6.5px;line-height:6.5px;letter-spacing:0.17px;color:#3a3a3a;">255.46 KB</div>
<div class="t" style="left:386.60px;width:200px;text-align:center;top:178px;font-size:6.5px;line-height:6.5px;letter-spacing:0.17px;color:#3a3a3a;">03 May 2013</div>
<div class="t" style="left:432.80px;width:200px;text-align:center;top:178px;font-size:6.5px;line-height:6.5px;letter-spacing:0.17px;color:#3a3a3a;">12</div>
<div class="t" style="left:478.05px;width:200px;text-align:center;top:178px;font-size:6.5px;line-height:6.5px;letter-spacing:0.17px;color:#3a3a3a;">21</div>
<div class="t" style="left:523.65px;width:200px;text-align:center;top:178px;font-size:6.5px;line-height:6.5px;letter-spacing:0.17px;color:#3a3a3a;">21</div>
<div class="t" style="left:568.90px;width:200px;text-align:center;top:178px;font-size:6.5px;line-height:6.5px;letter-spacing:0.17px;color:#3a3a3a;">256.94 KB</div>
<div class="b" style="left:464.0px;top:185.03px;width:45.2px;height:8.2px;background:#EAEAEA;"></div>
<div class="b" style="left:510.6px;top:185.03px;width:44.4px;height:8.2px;background:#EAEAEA;"></div>
<div class="b" style="left:556.0px;top:185.03px;width:44.1px;height:8.2px;background:#EAEAEA;"></div>
<div class="b" style="left:601.5px;top:185.03px;width:44.3px;height:8.2px;background:#EAEAEA;"></div>
<div class="b" style="left:646.9px;top:185.03px;width:44.0px;height:8.2px;background:#EAEAEA;"></div>
<div class="t" style="left:386.60px;width:200px;text-align:center;top:187px;font-size:6.5px;line-height:6.5px;letter-spacing:0.17px;color:#3a3a3a;">04 May 2013</div>
<div class="t" style="left:432.80px;width:200px;text-align:center;top:187px;font-size:6.5px;line-height:6.5px;letter-spacing:0.17px;color:#3a3a3a;">7</div>
<div class="t" style="left:478.05px;width:200px;text-align:center;top:187px;font-size:6.5px;line-height:6.5px;letter-spacing:0.17px;color:#3a3a3a;">7</div>
<div class="t" style="left:523.65px;width:200px;text-align:center;top:187px;font-size:6.5px;line-height:6.5px;letter-spacing:0.17px;color:#3a3a3a;">7</div>
<div class="t" style="left:568.90px;width:200px;text-align:center;top:187px;font-size:6.5px;line-height:6.5px;letter-spacing:0.17px;color:#3a3a3a;">131.35 KB</div>
<div class="b" style="left:464.0px;top:194.24px;width:45.2px;height:8.2px;background:#EAEAEA;"></div>
<div class="b" style="left:510.6px;top:194.24px;width:44.4px;height:8.2px;background:#EAEAEA;"></div>
<div class="b" style="left:556.0px;top:194.24px;width:44.1px;height:8.2px;background:#EAEAEA;"></div>
<div class="b" style="left:601.5px;top:194.24px;width:44.3px;height:8.2px;background:#EAEAEA;"></div>
<div class="b" style="left:646.9px;top:194.24px;width:44.0px;height:8.2px;background:#EAEAEA;"></div>
<div class="t" style="left:386.60px;width:200px;text-align:center;top:196px;font-size:6.5px;line-height:6.5px;letter-spacing:0.17px;color:#3a3a3a;">05 May 2013</div>
<div class="t" style="left:432.80px;width:200px;text-align:center;top:196px;font-size:6.5px;line-height:6.5px;letter-spacing:0.17px;color:#3a3a3a;">7</div>
<div class="t" style="left:478.05px;width:200px;text-align:center;top:196px;font-size:6.5px;line-height:6.5px;letter-spacing:0.17px;color:#3a3a3a;">9</div>
<div class="t" style="left:523.65px;width:200px;text-align:center;top:196px;font-size:6.5px;line-height:6.5px;letter-spacing:0.17px;color:#3a3a3a;">121</div>
<div class="t" style="left:568.90px;width:200px;text-align:center;top:196px;font-size:6.5px;line-height:6.5px;letter-spacing:0.17px;color:#3a3a3a;">2.20 MB</div>
<div class="t" style="left:386.60px;width:200px;text-align:center;top:205px;font-size:6.5px;line-height:6.5px;letter-spacing:0.17px;color:#3a3a3a;">06 May 2013</div>
<div class="t" style="left:432.80px;width:200px;text-align:center;top:205px;font-size:6.5px;line-height:6.5px;letter-spacing:0.17px;color:#3a3a3a;">9</div>
<div class="t" style="left:478.05px;width:200px;text-align:center;top:205px;font-size:6.5px;line-height:6.5px;letter-spacing:0.17px;color:#3a3a3a;">9</div>
<div class="t" style="left:523.65px;width:200px;text-align:center;top:205px;font-size:6.5px;line-height:6.5px;letter-spacing:0.17px;color:#3a3a3a;">9</div>
<div class="t" style="left:568.90px;width:200px;text-align:center;top:205px;font-size:6.5px;line-height:6.5px;letter-spacing:0.17px;color:#3a3a3a;">212.83 KB</div>
<div class="t" style="left:386.60px;width:200px;text-align:center;top:215px;font-size:6.5px;line-height:6.5px;letter-spacing:0.17px;color:#3a3a3a;">07 May 2013</div>
<div class="t" style="left:432.80px;width:200px;text-align:center;top:215px;font-size:6.5px;line-height:6.5px;letter-spacing:0.17px;color:#3a3a3a;">9</div>
<div class="t" style="left:478.05px;width:200px;text-align:center;top:215px;font-size:6.5px;line-height:6.5px;letter-spacing:0.17px;color:#3a3a3a;">9</div>
<div class="t" style="left:523.65px;width:200px;text-align:center;top:215px;font-size:6.5px;line-height:6.5px;letter-spacing:0.17px;color:#3a3a3a;">9</div>
<div class="t" style="left:568.90px;width:200px;text-align:center;top:215px;font-size:6.5px;line-height:6.5px;letter-spacing:0.17px;color:#3a3a3a;">179.87 KB</div>
<div class="t" style="left:386.60px;width:200px;text-align:center;top:224px;font-size:6.5px;line-height:6.5px;letter-spacing:0.17px;color:#3a3a3a;">08 May 2013</div>
<div class="t" style="left:432.80px;width:200px;text-align:center;top:224px;font-size:6.5px;line-height:6.5px;letter-spacing:0.17px;color:#3a3a3a;">8</div>
<div class="t" style="left:478.05px;width:200px;text-align:center;top:224px;font-size:6.5px;line-height:6.5px;letter-spacing:0.17px;color:#3a3a3a;">21</div>
<div class="t" style="left:523.65px;width:200px;text-align:center;top:224px;font-size:6.5px;line-height:6.5px;letter-spacing:0.17px;color:#3a3a3a;">75</div>
<div class="t" style="left:568.90px;width:200px;text-align:center;top:224px;font-size:6.5px;line-height:6.5px;letter-spacing:0.17px;color:#3a3a3a;">1.21 MB</div>
<div class="t" style="left:386.60px;width:200px;text-align:center;top:233px;font-size:6.5px;line-height:6.5px;letter-spacing:0.17px;color:#3a3a3a;">09 May 2013</div>
<div class="t" style="left:432.80px;width:200px;text-align:center;top:233px;font-size:6.5px;line-height:6.5px;letter-spacing:0.17px;color:#3a3a3a;">6</div>
<div class="t" style="left:478.05px;width:200px;text-align:center;top:233px;font-size:6.5px;line-height:6.5px;letter-spacing:0.17px;color:#3a3a3a;">10</div>
<div class="t" style="left:523.65px;width:200px;text-align:center;top:233px;font-size:6.5px;line-height:6.5px;letter-spacing:0.17px;color:#3a3a3a;">10</div>
<div class="t" style="left:568.90px;width:200px;text-align:center;top:233px;font-size:6.5px;line-height:6.5px;letter-spacing:0.17px;color:#3a3a3a;">46.94 KB</div>
<div class="t" style="left:386.60px;width:200px;text-align:center;top:242px;font-size:6.5px;line-height:6.5px;letter-spacing:0.17px;color:#3a3a3a;">10 May 2013</div>
<div class="t" style="left:432.80px;width:200px;text-align:center;top:242px;font-size:6.5px;line-height:6.5px;letter-spacing:0.17px;color:#3a3a3a;">11</div>
<div class="t" style="left:478.05px;width:200px;text-align:center;top:242px;font-size:6.5px;line-height:6.5px;letter-spacing:0.17px;color:#3a3a3a;">17</div>
<div class="t" style="left:523.65px;width:200px;text-align:center;top:242px;font-size:6.5px;line-height:6.5px;letter-spacing:0.17px;color:#3a3a3a;">82</div>
<div class="t" style="left:568.90px;width:200px;text-align:center;top:242px;font-size:6.5px;line-height:6.5px;letter-spacing:0.17px;color:#3a3a3a;">1.98 MB</div>
<div class="b" style="left:464.0px;top:249.50px;width:45.2px;height:8.2px;background:#EAEAEA;"></div>
<div class="b" style="left:510.6px;top:249.50px;width:44.4px;height:8.2px;background:#EAEAEA;"></div>
<div class="b" style="left:556.0px;top:249.50px;width:44.1px;height:8.2px;background:#EAEAEA;"></div>
<div class="b" style="left:601.5px;top:249.50px;width:44.3px;height:8.2px;background:#EAEAEA;"></div>
<div class="b" style="left:646.9px;top:249.50px;width:44.0px;height:8.2px;background:#EAEAEA;"></div>
<div class="t" style="left:386.60px;width:200px;text-align:center;top:252px;font-size:6.5px;line-height:6.5px;letter-spacing:0.17px;color:#3a3a3a;">11 May 2013</div>
<div class="t" style="left:432.80px;width:200px;text-align:center;top:252px;font-size:6.5px;line-height:6.5px;letter-spacing:0.17px;color:#3a3a3a;">10</div>
<div class="t" style="left:478.05px;width:200px;text-align:center;top:252px;font-size:6.5px;line-height:6.5px;letter-spacing:0.17px;color:#3a3a3a;">18</div>
<div class="t" style="left:523.65px;width:200px;text-align:center;top:252px;font-size:6.5px;line-height:6.5px;letter-spacing:0.17px;color:#3a3a3a;">18</div>
<div class="t" style="left:568.90px;width:200px;text-align:center;top:252px;font-size:6.5px;line-height:6.5px;letter-spacing:0.17px;color:#3a3a3a;">208.01 KB</div>
<div class="b" style="left:464.0px;top:258.71px;width:45.2px;height:8.2px;background:#EAEAEA;"></div>
<div class="b" style="left:510.6px;top:258.71px;width:44.4px;height:8.2px;background:#EAEAEA;"></div>
<div class="b" style="left:556.0px;top:258.71px;width:44.1px;height:8.2px;background:#EAEAEA;"></div>
<div class="b" style="left:601.5px;top:258.71px;width:44.3px;height:8.2px;background:#EAEAEA;"></div>
<div class="b" style="left:646.9px;top:258.71px;width:44.0px;height:8.2px;background:#EAEAEA;"></div>
<div class="t" style="left:386.60px;width:200px;text-align:center;top:261px;font-size:6.5px;line-height:6.5px;letter-spacing:0.17px;color:#3a3a3a;">12 May 2013</div>
<div class="t" style="left:432.80px;width:200px;text-align:center;top:261px;font-size:6.5px;line-height:6.5px;letter-spacing:0.17px;color:#3a3a3a;">10</div>
<div class="t" style="left:478.05px;width:200px;text-align:center;top:261px;font-size:6.5px;line-height:6.5px;letter-spacing:0.17px;color:#3a3a3a;">15</div>
<div class="t" style="left:523.65px;width:200px;text-align:center;top:261px;font-size:6.5px;line-height:6.5px;letter-spacing:0.17px;color:#3a3a3a;">15</div>
<div class="t" style="left:568.90px;width:200px;text-align:center;top:261px;font-size:6.5px;line-height:6.5px;letter-spacing:0.17px;color:#3a3a3a;">286.63 KB</div>
<div class="t" style="left:386.60px;width:200px;text-align:center;top:270px;font-size:6.5px;line-height:6.5px;letter-spacing:0.17px;color:#3a3a3a;">13 May 2013</div>
<div class="t" style="left:432.80px;width:200px;text-align:center;top:270px;font-size:6.5px;line-height:6.5px;letter-spacing:0.17px;color:#3a3a3a;">8</div>
<div class="t" style="left:478.05px;width:200px;text-align:center;top:270px;font-size:6.5px;line-height:6.5px;letter-spacing:0.17px;color:#3a3a3a;">9</div>
<div class="t" style="left:523.65px;width:200px;text-align:center;top:270px;font-size:6.5px;line-height:6.5px;letter-spacing:0.17px;color:#3a3a3a;">21</div>
<div class="t" style="left:568.90px;width:200px;text-align:center;top:270px;font-size:6.5px;line-height:6.5px;letter-spacing:0.17px;color:#3a3a3a;">494.81 KB</div>
<div class="t" style="left:386.60px;width:200px;text-align:center;top:279px;font-size:6.5px;line-height:6.5px;letter-spacing:0.17px;color:#3a3a3a;">14 May 2013</div>
<div class="t" style="left:432.80px;width:200px;text-align:center;top:279px;font-size:6.5px;line-height:6.5px;letter-spacing:0.17px;color:#3a3a3a;">9</div>
<div class="t" style="left:478.05px;width:200px;text-align:center;top:279px;font-size:6.5px;line-height:6.5px;letter-spacing:0.17px;color:#3a3a3a;">12</div>
<div class="t" style="left:523.65px;width:200px;text-align:center;top:279px;font-size:6.5px;line-height:6.5px;letter-spacing:0.17px;color:#3a3a3a;">16</div>
<div class="t" style="left:568.90px;width:200px;text-align:center;top:279px;font-size:6.5px;line-height:6.5px;letter-spacing:0.17px;color:#3a3a3a;">1.06 MB</div>
<div class="t" style="left:386.60px;width:200px;text-align:center;top:288px;font-size:6.5px;line-height:6.5px;letter-spacing:0.17px;color:#3a3a3a;">15 May 2013</div>
<div class="t" style="left:432.80px;width:200px;text-align:center;top:288px;font-size:6.5px;line-height:6.5px;letter-spacing:0.17px;color:#3a3a3a;">5</div>
<div class="t" style="left:478.05px;width:200px;text-align:center;top:288px;font-size:6.5px;line-height:6.5px;letter-spacing:0.17px;color:#3a3a3a;">44</div>
<div class="t" style="left:523.65px;width:200px;text-align:center;top:288px;font-size:6.5px;line-height:6.5px;letter-spacing:0.17px;color:#3a3a3a;">55</div>
<div class="t" style="left:568.90px;width:200px;text-align:center;top:288px;font-size:6.5px;line-height:6.5px;letter-spacing:0.17px;color:#3a3a3a;">290.88 KB</div>
<div class="t" style="left:386.60px;width:200px;text-align:center;top:298px;font-size:6.5px;line-height:6.5px;letter-spacing:0.17px;color:#3a3a3a;">16 May 2013</div>
<div class="t" style="left:432.80px;width:200px;text-align:center;top:298px;font-size:6.5px;line-height:6.5px;letter-spacing:0.17px;color:#3a3a3a;">11</div>
<div class="t" style="left:478.05px;width:200px;text-align:center;top:298px;font-size:6.5px;line-height:6.5px;letter-spacing:0.17px;color:#3a3a3a;">14</div>
<div class="t" style="left:523.65px;width:200px;text-align:center;top:298px;font-size:6.5px;line-height:6.5px;letter-spacing:0.17px;color:#3a3a3a;">14</div>
<div class="t" style="left:568.90px;width:200px;text-align:center;top:298px;font-size:6.5px;line-height:6.5px;letter-spacing:0.17px;color:#3a3a3a;">301.97 KB</div>
<div class="t" style="left:386.60px;width:200px;text-align:center;top:307px;font-size:6.5px;line-height:6.5px;letter-spacing:0.17px;color:#3a3a3a;">17 May 2013</div>
<div class="t" style="left:432.80px;width:200px;text-align:center;top:307px;font-size:6.5px;line-height:6.5px;letter-spacing:0.17px;color:#3a3a3a;">4</div>
<div class="t" style="left:478.05px;width:200px;text-align:center;top:307px;font-size:6.5px;line-height:6.5px;letter-spacing:0.17px;color:#3a3a3a;">7</div>
<div class="t" style="left:523.65px;width:200px;text-align:center;top:307px;font-size:6.5px;line-height:6.5px;letter-spacing:0.17px;color:#3a3a3a;">8</div>
<div class="t" style="left:568.90px;width:200px;text-align:center;top:307px;font-size:6.5px;line-height:6.5px;letter-spacing:0.17px;color:#3a3a3a;">422.50 KB</div>
<div class="b" style="left:464.0px;top:313.97px;width:45.2px;height:8.2px;background:#F4F4F4;"></div>
<div class="b" style="left:510.6px;top:313.97px;width:44.4px;height:8.2px;background:#F4F4F4;"></div>
<div class="b" style="left:556.0px;top:313.97px;width:44.1px;height:8.2px;background:#F4F4F4;"></div>
<div class="b" style="left:601.5px;top:313.97px;width:44.3px;height:8.2px;background:#F4F4F4;"></div>
<div class="b" style="left:646.9px;top:313.97px;width:44.0px;height:8.2px;background:#F4F4F4;"></div>
<div class="t" style="left:386.60px;width:200px;text-align:center;top:316px;font-size:6.5px;line-height:6.5px;letter-spacing:0.17px;color:#b4b4b4;">18 May 2013</div>
<div class="t" style="left:432.80px;width:200px;text-align:center;top:316px;font-size:6.5px;line-height:6.5px;letter-spacing:0.17px;color:#b4b4b4;">10</div>
<div class="t" style="left:478.05px;width:200px;text-align:center;top:316px;font-size:6.5px;line-height:6.5px;letter-spacing:0.17px;color:#b4b4b4;">14</div>
<div class="t" style="left:523.65px;width:200px;text-align:center;top:316px;font-size:6.5px;line-height:6.5px;letter-spacing:0.17px;color:#b4b4b4;">94</div>
<div class="t" style="left:568.90px;width:200px;text-align:center;top:316px;font-size:6.5px;line-height:6.5px;letter-spacing:0.17px;color:#b4b4b4;">2.31 MB</div>
<div class="b" style="left:464.0px;top:323.18px;width:45.2px;height:8.2px;background:#F4F4F4;"></div>
<div class="b" style="left:510.6px;top:323.18px;width:44.4px;height:8.2px;background:#F4F4F4;"></div>
<div class="b" style="left:556.0px;top:323.18px;width:44.1px;height:8.2px;background:#F4F4F4;"></div>
<div class="b" style="left:601.5px;top:323.18px;width:44.3px;height:8.2px;background:#F4F4F4;"></div>
<div class="b" style="left:646.9px;top:323.18px;width:44.0px;height:8.2px;background:#F4F4F4;"></div>
<div class="t" style="left:386.60px;width:200px;text-align:center;top:325px;font-size:6.5px;line-height:6.5px;letter-spacing:0.17px;color:#b4b4b4;">19 May 2013</div>
<div class="t" style="left:432.80px;width:200px;text-align:center;top:325px;font-size:6.5px;line-height:6.5px;letter-spacing:0.17px;color:#b4b4b4;">6</div>
<div class="t" style="left:478.05px;width:200px;text-align:center;top:325px;font-size:6.5px;line-height:6.5px;letter-spacing:0.17px;color:#b4b4b4;">6</div>
<div class="t" style="left:523.65px;width:200px;text-align:center;top:325px;font-size:6.5px;line-height:6.5px;letter-spacing:0.17px;color:#b4b4b4;">6</div>
<div class="t" style="left:568.90px;width:200px;text-align:center;top:325px;font-size:6.5px;line-height:6.5px;letter-spacing:0.17px;color:#b4b4b4;">82.74 KB</div>
<div class="t" style="left:386.60px;width:200px;text-align:center;top:334px;font-size:6.5px;line-height:6.5px;letter-spacing:0.17px;color:#b4b4b4;">20 May 2013</div>
<div class="t" style="left:432.80px;width:200px;text-align:center;top:334px;font-size:6.5px;line-height:6.5px;letter-spacing:0.17px;color:#b4b4b4;">7</div>
<div class="t" style="left:478.05px;width:200px;text-align:center;top:334px;font-size:6.5px;line-height:6.5px;letter-spacing:0.17px;color:#b4b4b4;">7</div>
<div class="t" style="left:523.65px;width:200px;text-align:center;top:334px;font-size:6.5px;line-height:6.5px;letter-spacing:0.17px;color:#b4b4b4;">9</div>
<div class="t" style="left:568.90px;width:200px;text-align:center;top:334px;font-size:6.5px;line-height:6.5px;letter-spacing:0.17px;color:#b4b4b4;">131.47 KB</div>
<div class="t" style="left:386.60px;width:200px;text-align:center;top:344px;font-size:6.5px;line-height:6.5px;letter-spacing:0.17px;color:#b4b4b4;">21 May 2013</div>
<div class="t" style="left:432.80px;width:200px;text-align:center;top:344px;font-size:6.5px;line-height:6.5px;letter-spacing:0.17px;color:#b4b4b4;">13</div>
<div class="t" style="left:478.05px;width:200px;text-align:center;top:344px;font-size:6.5px;line-height:6.5px;letter-spacing:0.17px;color:#b4b4b4;">25</div>
<div class="t" style="left:523.65px;width:200px;text-align:center;top:344px;font-size:6.5px;line-height:6.5px;letter-spacing:0.17px;color:#b4b4b4;">121</div>
<div class="t" style="left:568.90px;width:200px;text-align:center;top:344px;font-size:6.5px;line-height:6.5px;letter-spacing:0.17px;color:#b4b4b4;">2.56 MB</div>
<div class="t" style="left:386.60px;width:200px;text-align:center;top:353px;font-size:6.5px;line-height:6.5px;letter-spacing:0.17px;color:#3a3a3a;">22 May 2013</div>
<div class="t" style="left:432.80px;width:200px;text-align:center;top:353px;font-size:6.5px;line-height:6.5px;letter-spacing:0.17px;color:#3a3a3a;">6</div>
<div class="t" style="left:478.05px;width:200px;text-align:center;top:353px;font-size:6.5px;line-height:6.5px;letter-spacing:0.17px;color:#3a3a3a;">11</div>
<div class="t" style="left:523.65px;width:200px;text-align:center;top:353px;font-size:6.5px;line-height:6.5px;letter-spacing:0.17px;color:#3a3a3a;">11</div>
<div class="t" style="left:568.90px;width:200px;text-align:center;top:353px;font-size:6.5px;line-height:6.5px;letter-spacing:0.17px;color:#3a3a3a;">214.89 KB</div>
<div class="t" style="left:386.60px;width:200px;text-align:center;top:362px;font-size:6.5px;line-height:6.5px;letter-spacing:0.17px;color:#3a3a3a;">23 May 2013</div>
<div class="t" style="left:432.80px;width:200px;text-align:center;top:362px;font-size:6.5px;line-height:6.5px;letter-spacing:0.17px;color:#3a3a3a;">9</div>
<div class="t" style="left:478.05px;width:200px;text-align:center;top:362px;font-size:6.5px;line-height:6.5px;letter-spacing:0.17px;color:#3a3a3a;">11</div>
<div class="t" style="left:523.65px;width:200px;text-align:center;top:362px;font-size:6.5px;line-height:6.5px;letter-spacing:0.17px;color:#3a3a3a;">13</div>
<div class="t" style="left:568.90px;width:200px;text-align:center;top:362px;font-size:6.5px;line-height:6.5px;letter-spacing:0.17px;color:#3a3a3a;">701.58 KB</div>
<div class="t" style="left:386.60px;width:200px;text-align:center;top:371px;font-size:6.5px;line-height:6.5px;letter-spacing:0.17px;color:#b4b4b4;">24 May 2013</div>
<div class="t" style="left:432.80px;width:200px;text-align:center;top:371px;font-size:6.5px;line-height:6.5px;letter-spacing:0.17px;color:#b4b4b4;">10</div>
<div class="t" style="left:478.05px;width:200px;text-align:center;top:371px;font-size:6.5px;line-height:6.5px;letter-spacing:0.17px;color:#b4b4b4;">10</div>
<div class="t" style="left:523.65px;width:200px;text-align:center;top:371px;font-size:6.5px;line-height:6.5px;letter-spacing:0.17px;color:#b4b4b4;">12</div>
<div class="t" style="left:568.90px;width:200px;text-align:center;top:371px;font-size:6.5px;line-height:6.5px;letter-spacing:0.17px;color:#b4b4b4;">699.39 KB</div>
<div class="b" style="left:464.0px;top:378.44px;width:45.2px;height:8.2px;background:#F4F4F4;"></div>
<div class="b" style="left:510.6px;top:378.44px;width:44.4px;height:8.2px;background:#F4F4F4;"></div>
<div class="b" style="left:556.0px;top:378.44px;width:44.1px;height:8.2px;background:#F4F4F4;"></div>
<div class="b" style="left:601.5px;top:378.44px;width:44.3px;height:8.2px;background:#F4F4F4;"></div>
<div class="b" style="left:646.9px;top:378.44px;width:44.0px;height:8.2px;background:#F4F4F4;"></div>
<div class="t" style="left:386.60px;width:200px;text-align:center;top:380px;font-size:6.5px;line-height:6.5px;letter-spacing:0.17px;color:#b4b4b4;">25 May 2013</div>
<div class="t" style="left:432.80px;width:200px;text-align:center;top:380px;font-size:6.5px;line-height:6.5px;letter-spacing:0.17px;color:#b4b4b4;">6</div>
<div class="t" style="left:478.05px;width:200px;text-align:center;top:380px;font-size:6.5px;line-height:6.5px;letter-spacing:0.17px;color:#b4b4b4;">7</div>
<div class="t" style="left:523.65px;width:200px;text-align:center;top:380px;font-size:6.5px;line-height:6.5px;letter-spacing:0.17px;color:#b4b4b4;">9</div>
<div class="t" style="left:568.90px;width:200px;text-align:center;top:380px;font-size:6.5px;line-height:6.5px;letter-spacing:0.17px;color:#b4b4b4;">308.06 KB</div>
<div class="b" style="left:464.0px;top:387.65px;width:45.2px;height:8.2px;background:#F4F4F4;"></div>
<div class="b" style="left:510.6px;top:387.65px;width:44.4px;height:8.2px;background:#F4F4F4;"></div>
<div class="b" style="left:556.0px;top:387.65px;width:44.1px;height:8.2px;background:#F4F4F4;"></div>
<div class="b" style="left:601.5px;top:387.65px;width:44.3px;height:8.2px;background:#F4F4F4;"></div>
<div class="b" style="left:646.9px;top:387.65px;width:44.0px;height:8.2px;background:#F4F4F4;"></div>
<div class="t" style="left:386.60px;width:200px;text-align:center;top:390px;font-size:6.5px;line-height:6.5px;letter-spacing:0.17px;color:#b4b4b4;">26 May 2013</div>
<div class="t" style="left:432.80px;width:200px;text-align:center;top:390px;font-size:6.5px;line-height:6.5px;letter-spacing:0.17px;color:#b4b4b4;">9</div>
<div class="t" style="left:478.05px;width:200px;text-align:center;top:390px;font-size:6.5px;line-height:6.5px;letter-spacing:0.17px;color:#b4b4b4;">10</div>
<div class="t" style="left:523.65px;width:200px;text-align:center;top:390px;font-size:6.5px;line-height:6.5px;letter-spacing:0.17px;color:#b4b4b4;">10</div>
<div class="t" style="left:568.90px;width:200px;text-align:center;top:390px;font-size:6.5px;line-height:6.5px;letter-spacing:0.17px;color:#b4b4b4;">199.65 KB</div>
<div class="t" style="left:386.60px;width:200px;text-align:center;top:399px;font-size:6.5px;line-height:6.5px;letter-spacing:0.17px;color:#b4b4b4;">27 May 2013</div>
<div class="t" style="left:432.80px;width:200px;text-align:center;top:399px;font-size:6.5px;line-height:6.5px;letter-spacing:0.17px;color:#b4b4b4;">11</div>
<div class="t" style="left:478.05px;width:200px;text-align:center;top:399px;font-size:6.5px;line-height:6.5px;letter-spacing:0.17px;color:#b4b4b4;">16</div>
<div class="t" style="left:523.65px;width:200px;text-align:center;top:399px;font-size:6.5px;line-height:6.5px;letter-spacing:0.17px;color:#b4b4b4;">72</div>
<div class="t" style="left:568.90px;width:200px;text-align:center;top:399px;font-size:6.5px;line-height:6.5px;letter-spacing:0.17px;color:#b4b4b4;">1.77 MB</div>
<div class="t" style="left:386.60px;width:200px;text-align:center;top:408px;font-size:6.5px;line-height:6.5px;letter-spacing:0.17px;color:#3a3a3a;">28 May 2013</div>
<div class="t" style="left:432.80px;width:200px;text-align:center;top:408px;font-size:6.5px;line-height:6.5px;letter-spacing:0.17px;color:#3a3a3a;">10</div>
<div class="t" style="left:478.05px;width:200px;text-align:center;top:408px;font-size:6.5px;line-height:6.5px;letter-spacing:0.17px;color:#3a3a3a;">11</div>
<div class="t" style="left:523.65px;width:200px;text-align:center;top:408px;font-size:6.5px;line-height:6.5px;letter-spacing:0.17px;color:#3a3a3a;">12</div>
<div class="t" style="left:568.90px;width:200px;text-align:center;top:408px;font-size:6.5px;line-height:6.5px;letter-spacing:0.17px;color:#3a3a3a;">425.55 KB</div>
<div class="t" style="left:386.60px;width:200px;text-align:center;top:417px;font-size:6.5px;line-height:6.5px;letter-spacing:0.17px;color:#3a3a3a;">29 May 2013</div>
<div class="t" style="left:432.80px;width:200px;text-align:center;top:417px;font-size:6.5px;line-height:6.5px;letter-spacing:0.17px;color:#3a3a3a;">10</div>
<div class="t" style="left:478.05px;width:200px;text-align:center;top:417px;font-size:6.5px;line-height:6.5px;letter-spacing:0.17px;color:#3a3a3a;">10</div>
<div class="t" style="left:523.65px;width:200px;text-align:center;top:417px;font-size:6.5px;line-height:6.5px;letter-spacing:0.17px;color:#3a3a3a;">22</div>
<div class="t" style="left:568.90px;width:200px;text-align:center;top:417px;font-size:6.5px;line-height:6.5px;letter-spacing:0.17px;color:#3a3a3a;">482.56 KB</div>
<div class="t" style="left:386.60px;width:200px;text-align:center;top:426px;font-size:6.5px;line-height:6.5px;letter-spacing:0.17px;color:#3a3a3a;">30 May 2013</div>
<div class="t" style="left:432.80px;width:200px;text-align:center;top:426px;font-size:6.5px;line-height:6.5px;letter-spacing:0.17px;color:#3a3a3a;">8</div>
<div class="t" style="left:478.05px;width:200px;text-align:center;top:426px;font-size:6.5px;line-height:6.5px;letter-spacing:0.17px;color:#3a3a3a;">8</div>
<div class="t" style="left:523.65px;width:200px;text-align:center;top:426px;font-size:6.5px;line-height:6.5px;letter-spacing:0.17px;color:#3a3a3a;">8</div>
<div class="t" style="left:568.90px;width:200px;text-align:center;top:426px;font-size:6.5px;line-height:6.5px;letter-spacing:0.17px;color:#3a3a3a;">172.96 KB</div>
<div class="t" style="left:386.60px;width:200px;text-align:center;top:436px;font-size:6.5px;line-height:6.5px;letter-spacing:0.55px;color:#3a3a3a;font-weight:bold;">31 May 2013</div>
<div class="t" style="left:432.80px;width:200px;text-align:center;top:436px;font-size:6.5px;line-height:6.5px;letter-spacing:0.17px;color:#3a3a3a;">2</div>
<div class="t" style="left:478.05px;width:200px;text-align:center;top:436px;font-size:6.5px;line-height:6.5px;letter-spacing:0.17px;color:#3a3a3a;">6</div>
<div class="t" style="left:523.65px;width:200px;text-align:center;top:436px;font-size:6.5px;line-height:6.5px;letter-spacing:0.17px;color:#3a3a3a;">7</div>
<div class="t" style="left:568.90px;width:200px;text-align:center;top:436px;font-size:6.5px;line-height:6.5px;letter-spacing:0.17px;color:#3a3a3a;">56.00 KB</div>
<div class="b" style="left:464.0px;top:442.91px;width:45.2px;height:8.2px;background:#EAEAEA;"></div>
<div class="b" style="left:510.6px;top:442.91px;width:44.4px;height:8.2px;background:#EAEAEA;"></div>
<div class="b" style="left:556.0px;top:442.91px;width:44.1px;height:8.2px;background:#EAEAEA;"></div>
<div class="b" style="left:601.5px;top:442.91px;width:44.3px;height:8.2px;background:#EAEAEA;"></div>
<div class="b" style="left:646.9px;top:442.91px;width:44.0px;height:8.2px;background:#EAEAEA;"></div>
<div class="t" style="left:386.60px;width:200px;text-align:center;top:445px;font-size:6.5px;line-height:6.5px;letter-spacing:0.17px;color:#3a3a3a;">Average</div>
<div class="t" style="left:432.80px;width:200px;text-align:center;top:445px;font-size:6.5px;line-height:6.5px;letter-spacing:0.17px;color:#3a3a3a;">8</div>
<div class="t" style="left:478.05px;width:200px;text-align:center;top:445px;font-size:6.5px;line-height:6.5px;letter-spacing:0.17px;color:#3a3a3a;">12</div>
<div class="t" style="left:523.65px;width:200px;text-align:center;top:445px;font-size:6.5px;line-height:6.5px;letter-spacing:0.17px;color:#3a3a3a;">29</div>
<div class="t" style="left:568.90px;width:200px;text-align:center;top:445px;font-size:6.5px;line-height:6.5px;letter-spacing:0.17px;color:#3a3a3a;">650.69 KB</div>
<div class="b" style="left:464.0px;top:452.12px;width:45.2px;height:8.2px;background:#EAEAEA;"></div>
<div class="b" style="left:510.6px;top:452.12px;width:44.4px;height:8.2px;background:#EAEAEA;"></div>
<div class="b" style="left:556.0px;top:452.12px;width:44.1px;height:8.2px;background:#EAEAEA;"></div>
<div class="b" style="left:601.5px;top:452.12px;width:44.3px;height:8.2px;background:#EAEAEA;"></div>
<div class="b" style="left:646.9px;top:452.12px;width:44.0px;height:8.2px;background:#EAEAEA;"></div>
<div class="t" style="left:386.60px;width:200px;text-align:center;top:454px;font-size:6.5px;line-height:6.5px;letter-spacing:0.17px;color:#3a3a3a;">Total</div>
<div class="t" style="left:432.80px;width:200px;text-align:center;top:454px;font-size:6.5px;line-height:6.5px;letter-spacing:0.17px;color:#3a3a3a;">259</div>
<div class="t" style="left:478.05px;width:200px;text-align:center;top:454px;font-size:6.5px;line-height:6.5px;letter-spacing:0.17px;color:#3a3a3a;">398</div>
<div class="t" style="left:523.65px;width:200px;text-align:center;top:454px;font-size:6.5px;line-height:6.5px;letter-spacing:0.17px;color:#3a3a3a;">911</div>
<div class="t" style="left:568.90px;width:200px;text-align:center;top:454px;font-size:6.5px;line-height:6.5px;letter-spacing:0.17px;color:#3a3a3a;">19.70 MB</div>
</body></html>
